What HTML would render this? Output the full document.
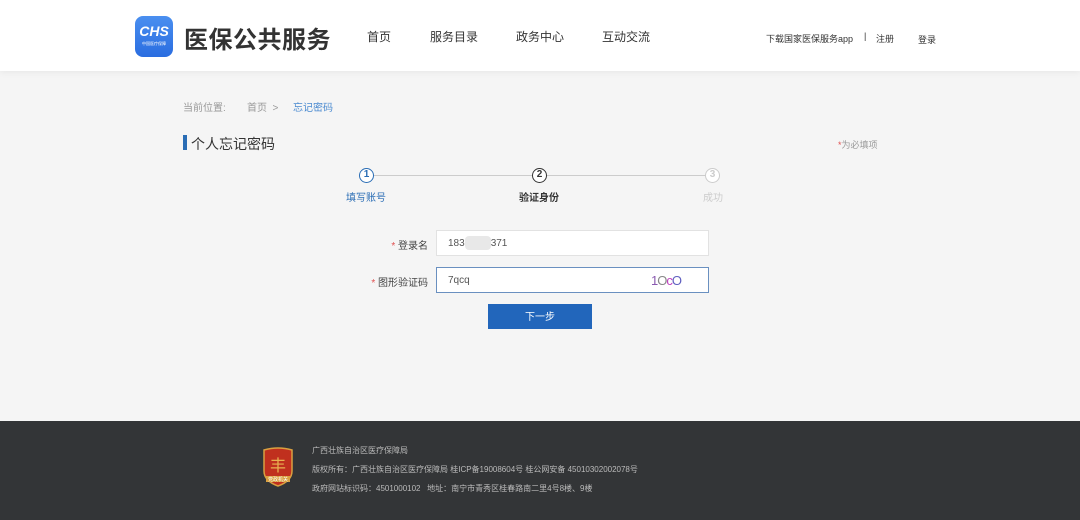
<!DOCTYPE html>
<html><head><meta charset="utf-8"><style>
*{margin:0;padding:0;box-sizing:border-box}
body{width:1080px;height:520px;overflow:hidden;background:#f5f5f5;font-family:"Liberation Sans","Noto Sans CJK SC",sans-serif;position:relative;color:#333}
.a{position:absolute;white-space:nowrap}
.hdr{position:absolute;left:0;top:0;width:1080px;height:71px;background:#fff;box-shadow:0 2px 6px rgba(0,0,0,.05)}
.logo{left:135px;top:16px;width:38px;height:41px;border-radius:8px;background:linear-gradient(#4a8ff0,#2a6de0);color:#fff;text-align:center}
.nav{top:28px;font-size:12px;color:#333}
.foot{position:absolute;left:0;top:421px;width:1080px;height:99px;background:#333537}
.ft{font-size:8px;color:#bbb;left:312px}
.circ{width:15px;height:15px;border:1.5px solid #2a6db5;border-radius:50%;font-size:10px;text-align:center;line-height:12px;font-weight:bold}
.inp{left:436px;width:273px;height:26px;background:#fff;border:1px solid #e2e2e2;font-size:10px;line-height:25px;padding-left:11px;color:#555}
.lbl{font-size:10px;color:#444;text-align:right;width:100px}
.lbl b{color:#e05050;font-weight:normal}
</style></head><body>
<div class="hdr"></div>
<div class="a logo"><div style="font-size:14px;font-weight:bold;font-style:italic;margin-top:8px;line-height:14px">CHS</div><div style="font-size:4px;margin-top:3px">中国医疗保障</div></div>
<div class="a" style="left:184px;top:20px;font-size:24px;font-weight:bold;color:#333;letter-spacing:0.5px">医保公共服务</div>
<div class="a nav" style="left:367px">首页</div>
<div class="a nav" style="left:430px">服务目录</div>
<div class="a nav" style="left:516px">政务中心</div>
<div class="a nav" style="left:602px">互动交流</div>
<div class="a" style="left:766px;top:32px;font-size:9px;color:#333">下载国家医保服务app</div>
<div class="a" style="left:864px;top:31px;font-size:9px;color:#333">|</div>
<div class="a" style="left:876px;top:32px;font-size:9px;color:#333">注册</div>
<div class="a" style="left:918px;top:33px;font-size:9px;color:#333">登录</div>

<div class="a" style="left:183px;top:99px;font-size:10px;color:#999">当前位置:</div>
<div class="a" style="left:247px;top:99px;font-size:10px;color:#999">首页 &nbsp;&gt;</div>
<div class="a" style="left:293px;top:99px;font-size:10px;color:#4a8ad0">忘记密码</div>
<div class="a" style="left:183px;top:135px;width:4px;height:15px;background:#2a6db5"></div>
<div class="a" style="left:191px;top:134px;font-size:14px;color:#333">个人忘记密码</div>
<div class="a" style="left:838px;top:138px;font-size:9px;color:#999"><span style="color:#e05050">*</span>为必填项</div>

<div class="a" style="left:374px;top:175px;width:332px;height:1px;background:#ccc"></div>
<div class="a circ" style="left:359px;top:168px;color:#2a6db5;background:#fff">1</div>
<div class="a circ" style="left:532px;top:168px;border-color:#333;color:#333;background:#fff">2</div>
<div class="a circ" style="left:705px;top:168px;border-color:#ccc;color:#ccc;background:#fff">3</div>
<div class="a" style="left:346px;top:189px;font-size:10px;color:#2a6db5">填写账号</div>
<div class="a" style="left:519px;top:189px;font-size:10px;color:#333;font-weight:bold">验证身份</div>
<div class="a" style="left:703px;top:189px;font-size:10px;color:#ccc">成功</div>

<div class="a lbl" style="left:328px;top:237px"><b>* </b>登录名</div>
<div class="a inp" style="top:230px;line-height:26px">183<span style="display:inline-block;width:26px;height:14px;background:#e8e8e8;vertical-align:middle;border-radius:4px"></span>371</div>
<div class="a lbl" style="left:328px;top:274px"><b>* </b>图形验证码</div>
<div class="a inp" style="top:267px;border-color:#6a90c0;line-height:26px">7qcq
<span style="position:absolute;left:214px;top:0;font-size:13px;color:#8a5ab0;letter-spacing:-1px">1<span style="color:#888">O</span><span style="color:#c040c0">c</span><span style="color:#6060c0">O</span></span></div>
<div class="a" style="left:488px;top:304px;width:104px;height:25px;background:#2266bb;color:#fff;font-size:10px;text-align:center;line-height:27px">下一步</div>

<div class="foot"></div>
<div class="a" style="left:262px;top:447px;width:32px;height:40px">
<svg width="32" height="40" viewBox="0 0 32 40"><path d="M2 3 Q16 -1 30 3 L30 24 Q30 34 16 39 Q2 34 2 24Z" fill="#c0301e" stroke="#d9a040" stroke-width="1.5"/><text x="16" y="24" font-size="16" fill="#e8b050" text-anchor="middle" font-family="Noto Sans CJK SC">丰</text><rect x="4" y="29" width="24" height="6" fill="#d9a040"/><text x="16" y="34" font-size="5" fill="#fff" text-anchor="middle" font-family="Noto Sans CJK SC">党政机关</text></svg></div>
<div class="a ft" style="top:445px">广西壮族自治区医疗保障局</div>
<div class="a ft" style="top:464px">版权所有：广西壮族自治区医疗保障局 桂ICP备19008604号 桂公网安备 45010302002078号</div>
<div class="a ft" style="top:483px">政府网站标识码：4501000102 &nbsp;&nbsp;地址：南宁市青秀区桂春路南二里4号8楼、9楼</div>
</body></html>
